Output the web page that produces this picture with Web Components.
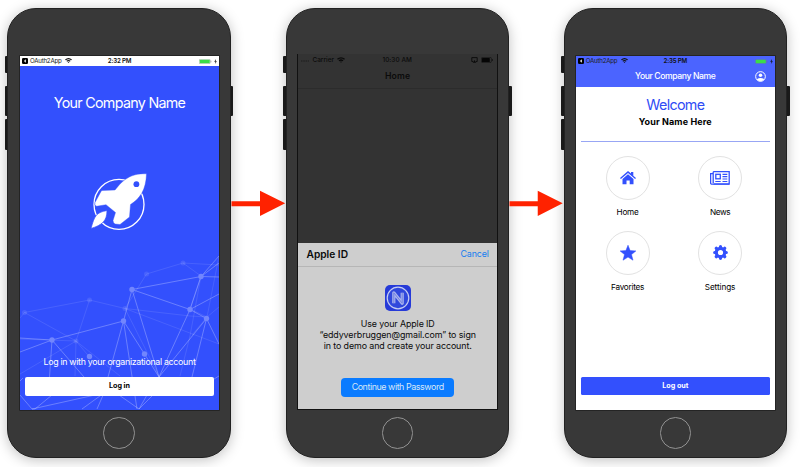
<!DOCTYPE html>
<html lang="en">
<head>
<meta charset="utf-8">
<title>Sign-in flow</title>
<style>
html,body{margin:0;background:#fff;overflow:hidden}
body{font-family:Inter,"Liberation Sans",sans-serif;color:#000}
</style>
</head>
<body>
<flow-stage>
  <phone-frame style="--x:12.7px"><login-screen></login-screen></phone-frame>
  <flow-arrow style="width:55px"></flow-arrow>
  <phone-frame class="mid" style="--x:11.7px;--w:200.4px;--t:46px;--h:356px"><apple-screen></apple-screen></phone-frame>
  <flow-arrow style="width:54.5px"></flow-arrow>
  <phone-frame style="--x:12px"><home-screen></home-screen></phone-frame>
</flow-stage>
<script>
class Base extends HTMLElement{
  constructor(){
    super();
    this.attachShadow({mode:'open'}).innerHTML=this.constructor.markup;
  }
}
const define=(name,markup)=>customElements.define(name,class extends Base{static get markup(){return markup}});

/* One line of text whose tracking is set so that it spans the "w" attribute. */
customElements.define('fit-text',class extends Base{
  static get markup(){return `<style>:host{display:block;white-space:nowrap;line-height:1}span{display:inline-block}</style><span><slot></slot></span>`}
  connectedCallback(){
    const s=this.shadowRoot.querySelector('span'),w=+this.getAttribute('w'),n=this.textContent.length;
    if(!w||!n)return;
    const gap=(w-s.getBoundingClientRect().width)/n;
    s.style.letterSpacing=gap.toFixed(4)+'px';
  }
});

define('flow-stage',`<style>
:host{display:flex;box-sizing:border-box;width:800px;height:467px;padding:8px 0 0 7.3px;background:#fff}
</style><slot></slot>`);

define('phone-frame',`<style>
:host{display:block;position:relative;flex:none;width:223.5px;height:449.7px;box-sizing:border-box;padding:var(--t,48px) 0 0 var(--x)}
.side{position:absolute;background:#1d1d1d;width:5px;border-radius:1px}
.l{left:-2.6px}.r{right:-2.6px}
.body{position:absolute;inset:0;background:#383838;border-radius:29px;border:1px solid #222;box-sizing:border-box;box-shadow:0 2px 13px rgba(0,0,0,.25)}
.screen{position:relative;width:var(--w,199px);height:var(--h,353.5px);overflow:hidden;box-shadow:0 0 0 .7px #1c1c1c}
:host(.mid) .screen{box-shadow:none}
.home{position:absolute;left:50%;top:409.3px;width:31.5px;height:31.5px;margin-left:-15.8px;border:1.3px solid #929292;border-radius:50%;box-sizing:border-box}
</style>
<i class="side l" style="top:47.5px;height:17px"></i><i class="side l" style="top:77.5px;height:30px"></i><i class="side l" style="top:110.5px;height:31px"></i><i class="side r" style="top:77.5px;height:30px"></i>
<div class="body"></div><div class="screen"><slot></slot></div><div class="home"></div>`);

define('flow-arrow',`<style>:host{display:block;position:relative;z-index:2;flex:none}svg{display:block;width:100%;margin-top:182px}</style>
<svg height="28" viewBox="0 0 55 28" preserveAspectRatio="none"><path d="M.5 11.3H29V.8L54.2 13.3 29 26V16.2H.5Z" fill="#ff2200"/></svg>`);

define('app-status',`<style>
:host{display:grid;grid-template-columns:1fr auto 1fr;align-items:center;height:10px;box-sizing:border-box;padding:0 2px 0 2px;font-size:6.2px;color:#222}
div{display:flex;align-items:center}.r{justify-content:flex-end;gap:2px}fit-text{margin-left:2px}
</style>
<div><svg width="6" height="6" viewBox="0 0 6 6"><rect width="6" height="6" rx="1.2" fill="#000"/><path d="M3.8 1.3 2 3l1.8 1.7z" fill="#fff"/></svg><fit-text w="31.5">OAuth2App</fit-text>
<svg style="margin-left:3.5px" width="7" height="5" viewBox="0 0 14 10"><path d="M0 3Q7-3 14 3L12.4 4.7Q7 0 1.6 4.7ZM2.7 5.7Q7 2 11.3 5.7L9.7 7.3Q7 5 4.3 7.3ZM5.3 8.2Q7 7 8.7 8.2L7 10Z" fill="#111"/></svg></div>
<slot></slot>
<div class="r"><svg width="12.5" height="5" viewBox="0 0 25 10"><rect x=".5" y=".5" width="22" height="9" rx="2" fill="none" stroke="#777" stroke-opacity=".8"/><rect x="1.5" y="1.5" width="20" height="7" rx="1" fill="#3bdd49"/><path d="M24 3.4v3.4" stroke="#777"/></svg><svg width="3" height="5" viewBox="0 0 6 10"><path d="M4 0 .5 5.5H3L2 10l3.7-5.7H3.3z" fill="#111"/></svg></div>`);

define('login-screen',`<style>
:host{display:flex;flex-direction:column;align-items:center;height:100%;background:#3350fd;color:#fff;position:relative}
app-status{align-self:stretch;background:#fff;flex:none}
.net{position:absolute;left:0;bottom:0}
.title{font-size:14.3px;margin-top:30px}
.rocket{margin-top:63px;display:block}
.hint{font-size:8.8px;margin-top:125px;position:relative}
.btn{position:relative;display:flex;align-items:center;justify-content:center;width:189px;height:19px;margin-top:9.5px;background:#fff;border-radius:2px;color:#000;font-size:7.2px;font-weight:700}
</style>
<svg class="net" width="199" height="169.5" viewBox="20 240 199 169.5" fill="none">
<g stroke="#fff" stroke-opacity=".1"><path d="M20 318 24.5 312.5 89.5 300 125 308.5 146.5 274 183 263 219 265M24.5 312.5 76 341 20 374M89.5 300 76 341 89.5 357M76 341 20 339M76 341 75 376M76 341 120 376M125 308.5 190 316 207 317 219 307M125 308.5 219 344M125 308.5 159 376M183 263 201 276 190 336 180 376M201 276 190 309 207 317 192 335M207 317 219 256"/></g>
<g stroke="#fff" stroke-opacity=".27" stroke-width="1"><path d="M20 338 52 340 123.5 321 132 289.5 190 309.5 206.5 318.5 219 344M132 289.5 201 276.5 219 256M132 289.5 159 377M201 276.5 190 309.5 159 377 206.5 318.5 192 377M201 276.5 219 277M201 276.5 219 263M190 309.5 219 294M123.5 321 144.5 354 159 377M123.5 321 108 377M123.5 321 137 409M20 352 52 340 49.5 377M52 340 84 377M20 395 32 409H35L52 395M32 409 104 393 82 409M104 393 97 409M119 395 139 409 147 395M219 376 214 379M20 381 23 378M139 409 154 394"/></g>
<g fill="#fff" fill-opacity=".1"><circle cx="24.5" cy="312.5" r="2.5"/><circle cx="89.5" cy="300" r="2.5"/><circle cx="76" cy="341" r="2.5"/><circle cx="146.5" cy="274" r="2.5"/><circle cx="183" cy="263" r="2.5"/><circle cx="125" cy="308.5" r="2.5"/></g>
<g fill="#7286fd"><circle cx="52" cy="340" r="2.7"/><circle cx="123.5" cy="321" r="2.7"/><circle cx="132" cy="289.5" r="2.7"/><circle cx="190" cy="309.5" r="2.7"/><circle cx="201" cy="276.5" r="2.7"/><circle cx="206.5" cy="318.5" r="2.7"/><circle cx="144.5" cy="354" r="2.7"/><circle cx="89.5" cy="356.5" r="2.7"/></g>
</svg>
<app-status><fit-text w="23.5" style="font-weight:600;color:#111">2:32 PM</fit-text></app-status>
<fit-text class="title" w="131.5">Your Company Name</fit-text>
<svg class="rocket" width="60" height="60" viewBox="0 0 60 60" fill="#fff"><circle cx="30" cy="31.4" r="25" fill="none" stroke="#fff" stroke-width="1.3"/><path d="M57.5 .8C47 .3 39 3 31 11L26 17 13.5 17.5Q12.5 17.5 12 18.5L6 29.5Q5.3 31.9 7.5 33.3L17 31.7 26.5 39.5 24 47.5Q24 49.5 26 51L31 51.5 40.5 44 41.5 31.5C51 25.5 57 17 57.5 .8Z" stroke="#3350fd" stroke-width=".4"/><circle cx="47.4" cy="11.2" r="2.9" fill="#3350fd"/><path d="M18 37.5C7 39.5 5.5 43 2 55.5 13 52 18 48 18 37.5Z" stroke="#3350fd" stroke-width=".7"/></svg>
<fit-text class="hint" w="152">Log in with your organizational account</fit-text>
<div class="btn"><fit-text w="21">Log in</fit-text></div>`);

define('apple-screen',`<style>
:host{display:flex;flex-direction:column;height:100%;background:#333;box-sizing:border-box;color:#0b0b0b}
.status{display:grid;grid-template-columns:1fr auto 1fr;align-items:center;height:11.5px;font-size:6.4px;font-weight:500;padding:0 4px 0 3px}
.status div{display:flex;align-items:center;gap:3px}.status .r{justify-content:flex-end}
.nav{display:flex;justify-content:center;align-items:center;height:22px;border-bottom:1px solid #2c2c2c;font-size:8.7px;font-weight:600}
.dim{height:154px}
.dark{border:solid #111;border-width:0 .7px}
.sheet{display:flex;flex-direction:column;align-items:center;background:#cecece;flex:1;border:solid #111;border-width:0 .6px .6px;color:#0a0a0a}
.bar{display:flex;align-items:center;justify-content:space-between;align-self:stretch;height:24px;padding:0 8px;border-bottom:1px solid #b6b6b6;box-sizing:border-box;font-weight:600;font-size:10.2px}
.cancel{color:#147cf0;font-weight:400;font-size:8.9px}
.logo{margin-top:18px;display:block}
.copy{display:flex;flex-direction:column;align-items:center;gap:2px;font-size:8.9px;margin-top:9.7px}
.btn{display:flex;align-items:center;justify-content:center;width:113.5px;height:19.3px;margin-top:26.8px;background:#0a7bff;border-radius:4px;color:#d8e7f7;font-size:8.9px}
</style>
<div class="dark">
<div class="status"><div><svg width="8" height="5"><path d="M0 4h8" stroke="#1c1c1c" stroke-width="1" stroke-dasharray="1.5 .8"/></svg><fit-text w="21.5">Carrier</fit-text><svg width="8" height="6" viewBox="0 0 14 10"><path d="M0 3Q7-3 14 3L12.4 4.7Q7 0 1.6 4.7ZM2.7 5.7Q7 2 11.3 5.7L9.7 7.3Q7 5 4.3 7.3ZM5.3 8.2Q7 7 8.7 8.2L7 10Z" fill="#0a0a0a"/></svg></div>
<fit-text w="29.5">10:30 AM</fit-text>
<div class="r"><svg width="7" height="6" viewBox="0 0 7 6"><path d="M2 4.5H.8V.6h5.4v3.9H5" fill="none" stroke="#0a0a0a" stroke-width=".9"/><path d="M3.5 3 1.7 5.7h3.6z" fill="#0a0a0a"/></svg><svg width="12" height="6" viewBox="0 0 12 6"><rect x=".4" y=".4" width="10" height="5.2" rx="1.3" fill="none" stroke="#111" stroke-width=".6"/><rect x="1" y="1" width="7.8" height="4" rx=".6" fill="#050505"/><path d="M11.4 2v2" stroke="#111" stroke-width=".8"/></svg></div></div>
<div class="nav"><fit-text w="25.5">Home</fit-text></div>
<div class="dim"></div></div>
<div class="sheet">
<div class="bar"><fit-text w="41.5">Apple ID</fit-text><fit-text w="28.5" class="cancel">Cancel</fit-text></div>
<svg class="logo" width="26" height="26" viewBox="0 0 26 26"><rect width="26" height="26" rx="5" fill="#263ad8"/><circle cx="13" cy="13" r="10.8" fill="#3048dc" stroke="#c5cdf2" stroke-width="1.2"/><path d="M8.8 18.2V7.8l8.4 10.4V7.8" fill="none" stroke="#a9b4ee" stroke-width="3.2" stroke-linejoin="round"/><path d="M8.8 18.2V7.8l8.4 10.4V7.8" fill="none" stroke="#7181e2" stroke-width="1"/></svg>
<div class="copy"><fit-text w="74">Use your Apple ID</fit-text><fit-text w="156.5">“eddyverbruggen@gmail.com” to sign</fit-text><fit-text w="148">in to demo and create your account.</fit-text></div>
<div class="btn"><fit-text w="92">Continue with Password</fit-text></div>
</div>`);

define('round-tile',`<style>
:host{display:flex;flex-direction:column;align-items:center;width:60px;font-size:8.2px}
.ring{display:flex;align-items:center;justify-content:center;width:44px;height:44px;box-sizing:border-box;border:1px solid #e2e2e2;border-radius:50%;margin-bottom:7.8px}
</style><div class="ring"><slot name="icon"></slot></div><slot></slot>`);

define('home-screen',`<style>
:host{display:flex;flex-direction:column;align-items:center;height:100%;background:#fff}
.head{align-self:stretch;background:#4b64ff;height:31px;flex:none}
.nav{display:grid;grid-template-columns:1fr auto 1fr;align-items:center;height:21px;padding:0 9px;color:#fff;font-size:8.6px;font-weight:500}
.nav svg{justify-self:end}
.welcome{font-size:14.3px;color:#2f4cf5;margin-top:11.2px}
.name{font-size:9px;font-weight:700;margin-top:4.5px}
.rule{width:189px;height:1px;background:#98a6f4;margin-top:15px;flex:none}
.tiles{display:grid;grid-template-columns:60px 60px;column-gap:32.5px;row-gap:15px;margin:14px 3px 0 0}
svg{display:block}
.btn{display:flex;align-items:center;justify-content:center;width:189px;height:18.5px;margin-top:auto;margin-bottom:14.5px;background:#3350fd;border-radius:1.5px;color:#fff;font-weight:700;font-size:7.2px;flex:none}
</style>
<div class="head"><app-status><fit-text w="23.5" style="font-weight:600;color:#111">2:35 PM</fit-text></app-status>
<div class="nav"><i></i><fit-text w="80.5">Your Company Name</fit-text><svg width="11" height="11" viewBox="0 0 22 22"><circle cx="11" cy="11" r="9.7" fill="none" stroke="#fff" stroke-width="2"/><circle cx="11" cy="8.3" r="3.5" fill="#fff"/><path d="M3.5 16.5Q11 11 18.5 16.5 16 20.5 11 20.5T3.5 16.5Z" fill="#fff"/></svg></div></div>
<fit-text class="welcome" w="58">Welcome</fit-text>
<fit-text class="name" w="73">Your Name Here</fit-text>
<div class="rule"></div>
<div class="tiles">
<round-tile><svg slot="icon" width="16" height="14" viewBox="0 0 16 14" fill="#3350fd"><path d="M8 0 11 2.6V1h2.3v3.7L16 7l-.9 1.1L8 2.1.9 8.1 0 7Z"/><path d="M8 3.3 13.5 8v5.3H9.7V9.4H6.5v3.9H2.5V8Z"/></svg><fit-text w="22">Home</fit-text></round-tile>
<round-tile><svg slot="icon" width="20" height="14" viewBox="0 0 20 14" fill="none" stroke="#3350fd"><path d="M3.2.7H19.2V13.2H1.5Q.6 13 .6 12V2.7H3.2M3.2.7V12" stroke-width="1.3"/><path d="M3.5 13H19" stroke-width="1.2"/><rect x="5.8" y="3.3" width="4.5" height="4.5" stroke-width="1.3"/><path d="M12.5 3.3H17.3M12.5 5.6H17.3M12.5 8H17.3M5.3 10.5H10.7M12.5 10.5H17.3" stroke-width="1.2"/></svg><fit-text w="20">News</fit-text></round-tile>
<round-tile><svg slot="icon" width="16" height="16" viewBox="0 0 16 16"><path d="M8 .2 10.1 5.6 15.9 5.9 11.5 9.6 13 15.2 8 12.1 3 15.2 4.5 9.6.1 5.9 5.9 5.6Z" fill="#3350fd" stroke="#3350fd" stroke-width=".5"/></svg><fit-text w="33">Favorites</fit-text></round-tile>
<round-tile><svg slot="icon" width="15" height="15" viewBox="0 0 15 15"><circle cx="7.5" cy="7.5" r="4.2" fill="none" stroke="#3350fd" stroke-width="3.2"/><path stroke="#3350fd" stroke-width="3.2" stroke-linecap="round" d="M7.5 1.7v1M7.5 12.3v1M1.7 7.5h1M12.3 7.5h1M3.3 3.3 4 4M11 11l.7.7M11.7 3.3 11 4M4 11l-.7.7"/></svg><fit-text w="30.5">Settings</fit-text></round-tile>
</div>
<div class="btn"><fit-text w="26">Log out</fit-text></div>`);
</script>
</body>
</html>
